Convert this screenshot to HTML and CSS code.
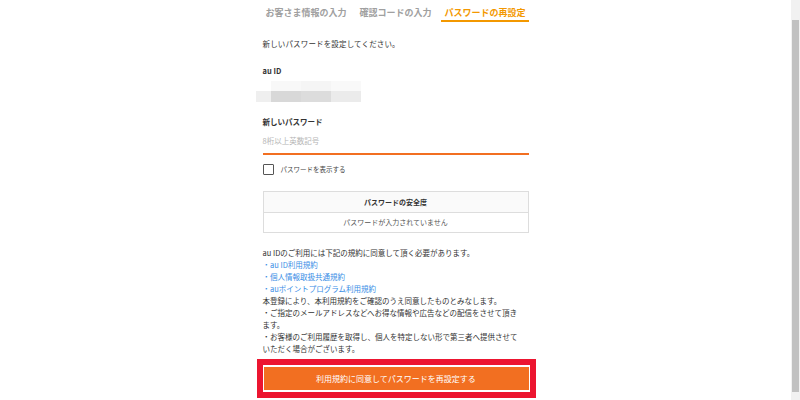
FILE: index.html
```
<!DOCTYPE html>
<html lang="ja">

<head>
  <meta charset="UTF-8">
  <meta name="viewport" content="width=device-width, initial-scale=1.0">
  <title>パスワードの再設定</title>
  <link rel="stylesheet" href="styles.css">
</head>

<body>

  <div class="page">
    <div class="content">

      <div class="steps">
        <div class="step">お客さま情報の入力</div>
        <div class="step">確認コードの入力</div>
        <div class="step current">パスワードの再設定</div>
      </div>

      <p class="intro">新しいパスワードを設定してください。</p>

      <div class="label first">au ID</div>
      <div class="mosaic">
        <div class="mosaic-row">
          <span class="m m-gap"></span>
          <span class="m m1"></span>
          <span class="m m2"></span>
          <span class="m m3"></span>
        </div>
        <div class="mosaic-row">
          <span class="m m4"></span>
          <span class="m m5"></span>
          <span class="m m6"></span>
          <span class="m m7"></span>
        </div>
      </div>

      <div class="label">新しいパスワード</div>
      <div class="field">8桁以上英数記号</div>

      <label class="show-pass">
        <span class="checkbox"></span>
        パスワードを表示する
      </label>

      <div class="strength">
        <div class="strength-head">パスワードの安全度</div>
        <div class="strength-body">パスワードが入力されていません</div>
      </div>

      <div class="terms">
        au IDのご利用には下記の規約に同意して頂く必要があります。<br>
        <a href="#">・au ID利用規約</a><br>
        <a href="#">・個人情報取扱共通規約</a><br>
        <a href="#">・auポイントプログラム利用規約</a><br>
        本登録により、本利用規約をご確認のうえ同意したものとみなします。<br>
        ・ご指定のメールアドレスなどへお得な情報や広告などの配信をさせて頂きます。<br>
        ・お客様のご利用履歴を取得し、個人を特定しない形で第三者へ提供させていただく場合がございます。
      </div>

      <div class="mark">
        <button class="submit">利用規約に同意してパスワードを再設定する</button>
      </div>

    </div>
  </div>

  <div class="scrollbar">
    <div class="thumb"></div>
  </div>

</body>

</html>
```

FILE: styles.css
```
body {
  margin: 0;
  height: 400px;
  overflow: hidden;
  display: flex;
  background: #fff;
  color: #333;
  font-family: "Noto Sans CJK JP", "Noto Sans", sans-serif;
}

.page {
  flex: 1;
  padding-top: 6px;
}

.content {
  width: 266px;
  margin: 0 auto;
}

.steps {
  display: flex;
  justify-content: flex-end;
  gap: 7px;
}

.step {
  font-size: 9px;
  line-height: 13px;
  font-weight: bold;
  color: #a0a0a0;
  padding: 0 3px 1px;
  border-bottom: 2px solid transparent;
  white-space: nowrap;
}

.step.current {
  color: #f39800;
  border-bottom-color: #f39800;
}

.intro {
  margin: 16px 0 0;
  font-size: 7.5px;
  line-height: 12px;
  letter-spacing: 0.02em;
}

.label {
  margin-top: 14px;
  font-size: 7.5px;
  line-height: 12px;
  font-weight: bold;
}

.label.first {
  margin-top: 15px;
}

.mosaic {
  margin: 4px 0 0 -7px;
  width: 105px;
}

.mosaic-row {
  display: flex;
}

.m {
  display: block;
  height: 10px;
}

.mosaic-row + .mosaic-row .m {
  height: 11px;
}

.m-gap { width: 15px; }
.m1 { width: 30px; background: #f8f8f8; }
.m2 { width: 30px; background: #f5f5f5; }
.m3 { width: 30px; background: #f9f9f9; }
.m4 { width: 15px; background: #efefef; }
.m5 { width: 30px; background: #d8d8d8; }
.m6 { width: 30px; background: #dcdcdc; }
.m7 { width: 30px; background: #ebebeb; }

.field {
  margin-top: 7px;
  font-size: 7.5px;
  line-height: 12px;
  color: #b5b5b5;
  padding-bottom: 6px;
  border-bottom: 2px solid #f26f21;
}

.show-pass {
  margin-top: 9px;
  display: flex;
  align-items: center;
  gap: 7px;
  font-size: 6.5px;
  line-height: 11px;
  color: #444;
}

.checkbox {
  width: 9px;
  height: 9px;
  border: 1px solid #555;
  border-radius: 1px;
}

.strength {
  margin-top: 16px;
  border: 1px solid #ddd;
  font-size: 7px;
  text-align: center;
}

.strength-head {
  line-height: 20px;
  font-weight: bold;
  background: #fafafa;
  border-bottom: 1px solid #ddd;
}

.strength-body {
  line-height: 19px;
  color: #555;
}

.terms {
  margin-top: 14px;
  width: 258px;
  font-size: 7.5px;
  line-height: 12px;
}

.terms a {
  color: #3a8ee6;
  text-decoration: none;
}

.mark {
  margin: 4px -7px 0 -6px;
  border: 6px solid #ec1530;
  padding: 2px 1px;
  display: flex;
}

.submit {
  flex: 1;
  height: 23px;
  border: 0;
  background: #f26f21;
  color: #fff;
  font-family: inherit;
  font-size: 8px;
  padding: 0;
}

.scrollbar {
  width: 9px;
  background: #f1f1f1;
  padding: 20px 1px 8px;
  box-sizing: border-box;
  display: flex;
}

.thumb {
  flex: 1;
  background: #c1c1c1;
}
```
